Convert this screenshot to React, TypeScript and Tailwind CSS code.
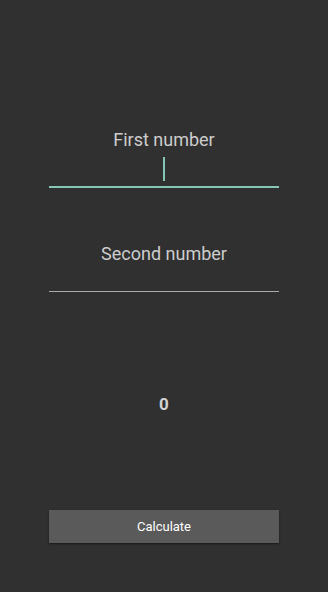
import React from "react";

export default function App() {
  return (
    <div
      className="w-[328px] h-[592px] bg-[#303030] flex flex-col px-[49px] pt-[130px]"
      style={{ fontFamily: "Roboto, 'Liberation Sans', sans-serif" }}
    >
      <div className="h-[20px] leading-[20px] text-center text-[18px] text-[#cdcdcd]">First number</div>
      <div className="h-[36px] flex justify-center items-end pb-[5px]">
        <div className="w-[2px] h-[24px] bg-[#86c4b5]" />
      </div>
      <div className="h-[2px] bg-[#86c4b5]" />
      <div className="h-[56px]" />
      <div className="h-[20px] leading-[20px] text-center text-[18px] text-[#cdcdcd]">Second number</div>
      <div className="h-[27px]" />
      <div className="h-[1px] bg-[#ababab]" />
      <div className="h-[102px]" />
      <div className="h-[20px] leading-[20px] text-center text-[17px] font-bold text-[#d2d2d2]">0</div>
      <div className="h-[96px]" />
      <button className="h-[33px] w-full bg-[#5a5a5a] text-white text-[13px] flex items-center justify-center shadow-[0_1px_2px_rgba(0,0,0,0.5)]">
        Calculate
      </button>
    </div>
  );
}
